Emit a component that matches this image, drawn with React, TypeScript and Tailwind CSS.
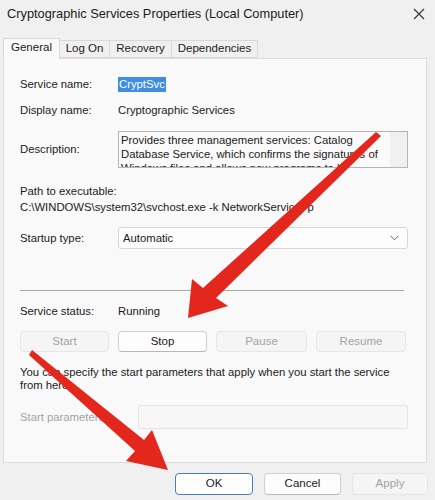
import React from "react";

const font = { fontFamily: '"Liberation Sans", Arial, sans-serif' };

function Btn({ label, disabled, primary, w }: { label: string; disabled?: boolean; primary?: boolean; w: string }) {
  const base = "h-full flex items-center justify-center rounded-[4px] text-[11.5px] border ";
  let cls = "";
  if (disabled) cls = "bg-[#f5f5f5] border-[#e6e6e6] text-[#a3a3a3]";
  else if (primary) cls = "bg-[#fdfdfd] border-[#3f7fc0] text-[#1b1b1b]";
  else cls = "bg-[#fdfdfd] border-[#d0d0d0] border-b-[#b8b8b8] text-[#1b1b1b]";
  return <div className={base + cls + " " + w}>{label}</div>;
}

export default function App() {
  return (
    <div className="relative w-[435px] h-[500px] bg-[#f0f0f0] overflow-hidden text-[#1b1b1b]" style={font}>
      {/* title bar */}
      <div className="h-[28px] flex items-center justify-between pl-[7px] pr-[8px]">
        <span className="text-[12.8px] text-[#1b1b1b]">
          Cryptographic Services Properties (Local Computer)
        </span>
        <svg width="12" height="12" viewBox="0 0 12 12" className="mr-[2px]">
          <path d="M1 1 L11 11 M11 1 L1 11" stroke="#333" strokeWidth="1.1" />
        </svg>
      </div>
      {/* tabs */}
      <div className="h-[30px] flex items-end pl-[3px] text-[11.5px]">
        <div className="w-[57px] h-[21px] flex items-center justify-center bg-[#f9f9f9] border border-b-0 border-[#d9d9d9] relative z-10 -mb-px pb-[2px]">General</div>
        <div className="w-[50px] h-[18px] flex items-center justify-center bg-[#f0f0f0] border border-l-0 border-[#d9d9d9]">Log On</div>
        <div className="w-[62px] h-[18px] flex items-center justify-center bg-[#f0f0f0] border border-l-0 border-[#d9d9d9]">Recovery</div>
        <div className="w-[86px] h-[18px] flex items-center justify-center bg-[#f0f0f0] border border-l-0 border-[#d9d9d9]">Dependencies</div>
      </div>
      {/* panel */}
      <div className="ml-[3px] w-[424px] h-[405px] bg-[#f9f9f9] border border-[#dcdcdc] pl-[16px] pr-[18px] text-[11.3px]">
        <div className="mt-[17px] h-[16px] flex items-center">
          <span className="w-[98px]">Service name:</span>
          <span className="bg-[#3d8de0] text-white px-px leading-[15px]">CryptSvc</span>
        </div>
        <div className="mt-[10px] h-[16px] flex items-center">
          <span className="w-[98px]">Display name:</span>
          <span>Cryptographic Services</span>
        </div>
        <div className="mt-[13px] h-[37px] flex items-center">
          <span className="w-[98px]">Description:</span>
          <div className="flex-1 h-full border border-[#b5b5b5] bg-[#fafafa] flex overflow-hidden">
            <div className="flex-1 h-full pl-[2px] pt-px leading-[14px] overflow-hidden">
              Provides three management services: Catalog Database Service, which confirms the signatures of Windows files and allows new programs to be installed
            </div>
            <div className="w-[17px] h-full bg-[#f0f0f0]" />
          </div>
        </div>
        <div className="mt-[15px] h-[16px] flex items-center">Path to executable:</div>
        <div className="h-[16px] flex items-center">C:\WINDOWS\system32\svchost.exe -k NetworkService -p</div>
        <div className="mt-[12px] h-[22px] flex items-center">
          <span className="w-[98px]">Startup type:</span>
          <div className="flex-1 h-full bg-[#fdfdfd] border border-[#d6d6d6] rounded-[3px] flex items-center justify-between pl-[4px] pr-[8px]">
            <span>Automatic</span>
            <svg width="9" height="6" viewBox="0 0 9 6">
              <path d="M0.5 0.8 L4.5 4.8 L8.5 0.8" fill="none" stroke="#666" strokeWidth="1" />
            </svg>
          </div>
        </div>
        <div className="mt-[41px] h-px bg-[#a8a8a8] mr-[4px]" />
        <div className="mt-[12px] h-[16px] flex items-center">
          <span className="w-[98px]">Service status:</span>
          <span>Running</span>
        </div>
        <div className="mt-[12px] h-[21px] flex gap-[9px]">
          <Btn label="Start" disabled w="w-[89px]" />
          <Btn label="Stop" w="w-[89px]" />
          <Btn label="Pause" disabled w="w-[91px]" />
          <Btn label="Resume" disabled w="w-[90px]" />
        </div>
        <div className="mt-[14px] leading-[13px]">
          You can specify the start parameters that apply when you start the service from here.
        </div>
        <div className="mt-[13px] h-[24px] flex items-center">
          <span className="w-[118px] text-[#a3a3a3]">Start parameters:</span>
          <div className="flex-1 h-full border border-[#e4e4e4] bg-[#f7f7f7] rounded-[2px]" />
        </div>
      </div>
      {/* bottom buttons */}
      <div className="mt-[10px] h-[22px] flex justify-end gap-[11px] pr-[7px]">
        <Btn label="OK" primary w="w-[78px]" />
        <Btn label="Cancel" w="w-[77px]" />
        <Btn label="Apply" disabled w="w-[76px]" />
      </div>
      {/* arrows overlay */}
      <svg className="absolute inset-0 pointer-events-none" width="435" height="500" viewBox="0 0 435 500">
        <polygon points="188,318 228,306 216,298 381,136 376,132 203,288 192,279" fill="#e3271d" />
        <polygon points="168,470 152,430 144,440 32,350 29,355 135,451 126,461" fill="#e3271d" />
      </svg>
    </div>
  );
}
